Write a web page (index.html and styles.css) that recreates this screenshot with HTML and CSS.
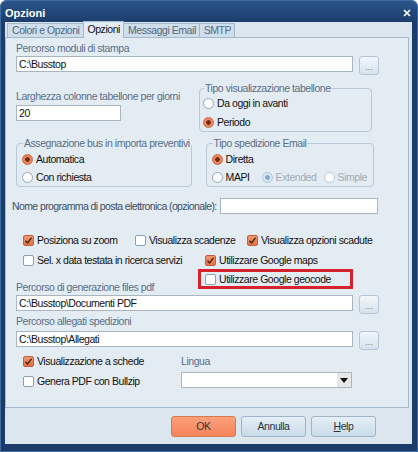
FILE: index.html
```html
<!DOCTYPE html>
<html lang="it">
<head>
    <meta charset="UTF-8">
    <title>Opzioni</title>
    <link rel="stylesheet" href="styles.css">
</head>
<body>
    <div class="window">
        <div class="titlebar">
            <span class="title">Opzioni</span>
            <svg class="close" width="8" height="8" viewBox="0 0 8 8"><path d="M1 1L7 7M7 1L1 7" stroke="#fff" stroke-width="1.7"/></svg>
        </div>
        <div class="client">
            <div class="tabs">
                <div class="tab">Colori e Opzioni</div>
                <div class="tab active">Opzioni</div>
                <div class="tab">Messaggi Email</div>
                <div class="tab">SMTP</div>
            </div>
            <div class="panel">
                <div class="label">Percorso moduli di stampa</div>
                <div class="path-row">
                    <div class="field path">C:\Busstop</div>
                    <div class="dots">...</div>
                </div>

                <div class="row-two">
                    <div class="col-width">
                        <div class="label">Larghezza colonne tabellone per giorni</div>
                        <div class="field short">20</div>
                    </div>
                    <fieldset class="group group-view">
                        <legend>Tipo visualizzazione tabellone</legend>
                        <div class="opt"><span class="radio"></span>Da oggi in avanti</div>
                        <div class="opt second"><span class="radio on"></span>Periodo</div>
                    </fieldset>
                </div>

                <div class="row-three">
                    <fieldset class="group group-bus">
                        <legend>Assegnazione bus in importa preventivi</legend>
                        <div class="opt"><span class="radio on"></span>Automatica</div>
                        <div class="opt next"><span class="radio"></span>Con richiesta</div>
                    </fieldset>
                    <fieldset class="group group-mail">
                        <legend>Tipo spedizione Email</legend>
                        <div class="opt"><span class="radio on"></span>Diretta</div>
                        <div class="opt-line next">
                            <div class="opt w-mapi"><span class="radio"></span>MAPI</div>
                            <div class="opt w-ext disabled"><span class="radio dis-on"></span>Extended</div>
                            <div class="opt disabled"><span class="radio dis"></span>Simple</div>
                        </div>
                    </fieldset>
                </div>

                <div class="mail-row">
                    <span class="label dark">Nome programma di posta elettronica (opzionale):</span>
                    <div class="field mail"></div>
                </div>

                <div class="check-row first">
                    <div class="check w1"><span class="box on"><svg width="9" height="9" viewBox="0 0 9 9"><path d="M1.5 4.8L3.6 7L7.5 1.8" fill="none" stroke="#4a2010" stroke-width="1.4"/></svg></span>Posiziona su zoom</div>
                    <div class="check w2"><span class="box"></span>Visualizza scadenze</div>
                    <div class="check"><span class="box on"><svg width="9" height="9" viewBox="0 0 9 9"><path d="M1.5 4.8L3.6 7L7.5 1.8" fill="none" stroke="#4a2010" stroke-width="1.4"/></svg></span>Visualizza opzioni scadute</div>
                </div>
                <div class="check-row">
                    <div class="check w-wide"><span class="box"></span>Sel. x data testata in ricerca servizi</div>
                    <div class="check"><span class="box on"><svg width="9" height="9" viewBox="0 0 9 9"><path d="M1.5 4.8L3.6 7L7.5 1.8" fill="none" stroke="#4a2010" stroke-width="1.4"/></svg></span>Utilizzare Google maps</div>
                </div>
                <div class="geo-row">
                    <div class="label geo-label">Percorso di generazione files pdf</div>
                    <div class="highlight">
                        <div class="check"><span class="box"></span>Utilizzare Google geocode</div>
                    </div>
                </div>
                <div class="path-row">
                    <div class="field path">C:\Busstop\Documenti PDF</div>
                    <div class="dots">...</div>
                </div>

                <div class="label gap-small">Percorso allegati spedizioni</div>
                <div class="path-row low">
                    <div class="field path">C:\Busstop\Allegati</div>
                    <div class="dots">...</div>
                </div>

                <div class="bottom-row">
                    <div class="col-checks">
                        <div class="check tall"><span class="box on"><svg width="9" height="9" viewBox="0 0 9 9"><path d="M1.5 4.8L3.6 7L7.5 1.8" fill="none" stroke="#4a2010" stroke-width="1.4"/></svg></span>Visualizzazione a schede</div>
                        <div class="check tall"><span class="box"></span>Genera PDF con Bullzip</div>
                    </div>
                    <div class="col-lang">
                        <div class="label lang">Lingua</div>
                        <div class="select">
                            <span class="arrow"><svg width="8" height="5" viewBox="0 0 8 5"><path d="M0 0H8L4 5Z" fill="#111"/></svg></span>
                        </div>
                    </div>
                </div>
            </div>
            <div class="footer">
                <div class="button ok">OK</div>
                <div class="button">Annulla</div>
                <div class="button"><u>H</u>elp</div>
            </div>
        </div>
    </div>
</body>
</html>
```

FILE: styles.css
```css
body {
    margin: 0;
    background: #ffffff;
    font-family: "Liberation Sans", Arial, sans-serif;
    font-size: 10.5px;
    letter-spacing: -0.45px;
    color: #111111;
}
.window {
    width: 418px;
    height: 452px;
    box-sizing: border-box;
    padding: 0 6px 8px 5px;
    background: linear-gradient(#2a568c, #1c3d6b 22px, #1b3b68);
    border-radius: 7px 7px 0 0;
    box-shadow: inset 0 0 0 1px #3f6ca2;
}
.titlebar {
    height: 22px;
    display: flex;
    align-items: center;
    justify-content: space-between;
}
.title {
    color: #ffffff;
    font-weight: bold;
    font-size: 11px;
    letter-spacing: 0;
    margin-top: 4px;
}
.close {
    margin-right: 1px;
    margin-top: 3px;
}
.client {
    height: 422px;
    background: #dce6ef;
    display: flex;
    flex-direction: column;
}
.tabs {
    height: 15px;
    display: flex;
    align-items: flex-end;
    padding-left: 2px;
    position: relative;
    z-index: 1;
}
.tab {
    height: 13px;
    line-height: 13px;
    padding: 0 3px 0 4px;
    border: 1px solid #a5b9cd;
    border-bottom: none;
    background: #cfdeeb;
    color: #53697f;
    margin-right: -1px;
}
.tab.active {
    height: 16px;
    line-height: 15px;
    background: #e3ebf3;
    color: #111111;
    margin-bottom: -1px;
}
.panel {
    height: 371px;
    box-sizing: border-box;
    margin-right: 3px;
    border: 1px solid #a5b9cd;
    background: #e3ebf3;
    padding: 4px 0 0 10px;
}
.label {
    line-height: 13px;
    height: 13px;
    color: #5a7088;
    white-space: nowrap;
}
.label.dark {
    color: #3f4f60;
}
.path-row {
    display: flex;
    align-items: flex-start;
    margin-top: 1px;
}
.path-row.low {
    margin-top: 3px;
}
.field {
    height: 16px;
    box-sizing: border-box;
    border: 1px solid #a9b5c1;
    background: #ffffff;
    line-height: 14px;
    padding-left: 2px;
    color: #111111;
}
.field.path {
    width: 337px;
}
.field.short {
    width: 105px;
    margin-top: 2px;
}
.field.mail {
    width: 158px;
}
.dots {
    width: 20px;
    height: 19px;
    box-sizing: border-box;
    margin-left: 6px;
    border: 1px solid #b4c5d5;
    border-radius: 3px;
    background: linear-gradient(#f1f6fa, #d6e3ee);
    color: #6a7a8a;
    font-size: 9px;
    text-align: center;
    line-height: 20px;
    letter-spacing: 0;
}
.row-two {
    display: flex;
    margin-top: 7px;
}
.col-width {
    width: 183px;
    padding-top: 8px;
}
.group {
    margin: 0;
    border: 1px solid #b8c8d8;
    border-radius: 4px;
    padding: 0 0 2px 3px;
    box-sizing: border-box;
}
.group legend {
    padding: 0 1px;
    margin-left: 1px;
    line-height: 13px;
    color: #5a6e84;
    white-space: nowrap;
}
.group-view {
    width: 173px;
}
.group-view .opt {
    margin-top: 1px;
}
.group-view .opt.second {
    margin-top: 5px;
}
.row-three {
    display: flex;
    margin-top: 5px;
}
.group-bus {
    width: 175px;
    padding-left: 5px;
}
.group-mail {
    width: 168px;
    margin-left: 14px;
    padding-left: 5px;
}
.row-three .opt {
    margin-top: 2px;
}
.row-three .next {
    margin-top: 4px;
}
.opt-line {
    display: flex;
}
.opt-line .opt {
    margin-top: 0;
}
.opt {
    height: 14px;
    display: flex;
    align-items: center;
    white-space: nowrap;
}
.w-mapi {
    width: 50px;
}
.w-ext {
    width: 62px;
}
.opt.disabled {
    color: #a0acb8;
}
.radio {
    width: 11px;
    height: 11px;
    box-sizing: border-box;
    border: 1px solid #93a6ba;
    border-radius: 50%;
    background: #ffffff;
    margin-right: 3px;
    flex-shrink: 0;
}
.radio.on {
    border-color: #c86a46;
    background: radial-gradient(circle, #6b2a12 0 2px, #ee8459 2.5px);
}
.radio.dis-on {
    border-color: #b3c8dc;
    background: radial-gradient(circle, #7fa8d0 0 2px, #d6e5f2 2.5px);
}
.radio.dis {
    border-color: #b7c5d3;
}
.mail-row {
    display: flex;
    align-items: center;
    margin-top: 11px;
    margin-left: -4px;
}
.mail-row .label {
    width: 208px;
    letter-spacing: -0.6px;
}
.check-row {
    display: flex;
    height: 20px;
    padding-left: 7px;
}
.check-row.first {
    margin-top: 16px;
}
.check {
    display: flex;
    align-items: center;
    white-space: nowrap;
}
.w1 {
    width: 112px;
}
.w2 {
    width: 112px;
}
.w-wide {
    width: 182px;
}
.box {
    width: 11px;
    height: 11px;
    box-sizing: border-box;
    border: 1px solid #8e9fb2;
    border-radius: 2px;
    background: #ffffff;
    margin-right: 3px;
    display: flex;
    align-items: center;
    justify-content: center;
    flex-shrink: 0;
}
.box.on {
    border-color: #c0623f;
    background: linear-gradient(#f19670, #e4703f);
}
.geo-row {
    display: flex;
    margin-top: -1px;
}
.geo-label {
    width: 182px;
    margin-top: 12px;
}
.highlight {
    width: 155px;
    height: 20px;
    box-sizing: border-box;
    border: 3px solid #d8222b;
    padding-left: 4px;
    display: flex;
    align-items: center;
}
.gap-small {
    margin-top: 1px;
}
.bottom-row {
    display: flex;
    margin-top: 1px;
}
.col-checks {
    width: 165px;
    padding-left: 7px;
    box-sizing: border-box;
}
.check.tall {
    height: 20px;
}
.label.lang {
    height: 20px;
    line-height: 20px;
}
.select {
    width: 171px;
    height: 16px;
    margin-top: 1px;
    box-sizing: border-box;
    border: 1px solid #a9b5c1;
    background: #ffffff;
    display: flex;
    justify-content: flex-end;
}
.arrow {
    width: 14px;
    background: #e8e8e8;
    display: flex;
    align-items: center;
    justify-content: center;
}
.footer {
    flex: 1;
    display: flex;
    justify-content: flex-end;
    align-items: flex-start;
    padding: 8px 36px 0 0;
    gap: 5px;
}
.button {
    width: 65px;
    height: 21px;
    box-sizing: border-box;
    border: 1px solid #9fb4c8;
    border-radius: 3px;
    background: linear-gradient(#e6eff6, #c9dbe8);
    text-align: center;
    line-height: 19px;
    color: #2a3440;
}
.button.ok {
    border-color: #d7794f;
    background: linear-gradient(#fca07a, #f5845b);
}
```
